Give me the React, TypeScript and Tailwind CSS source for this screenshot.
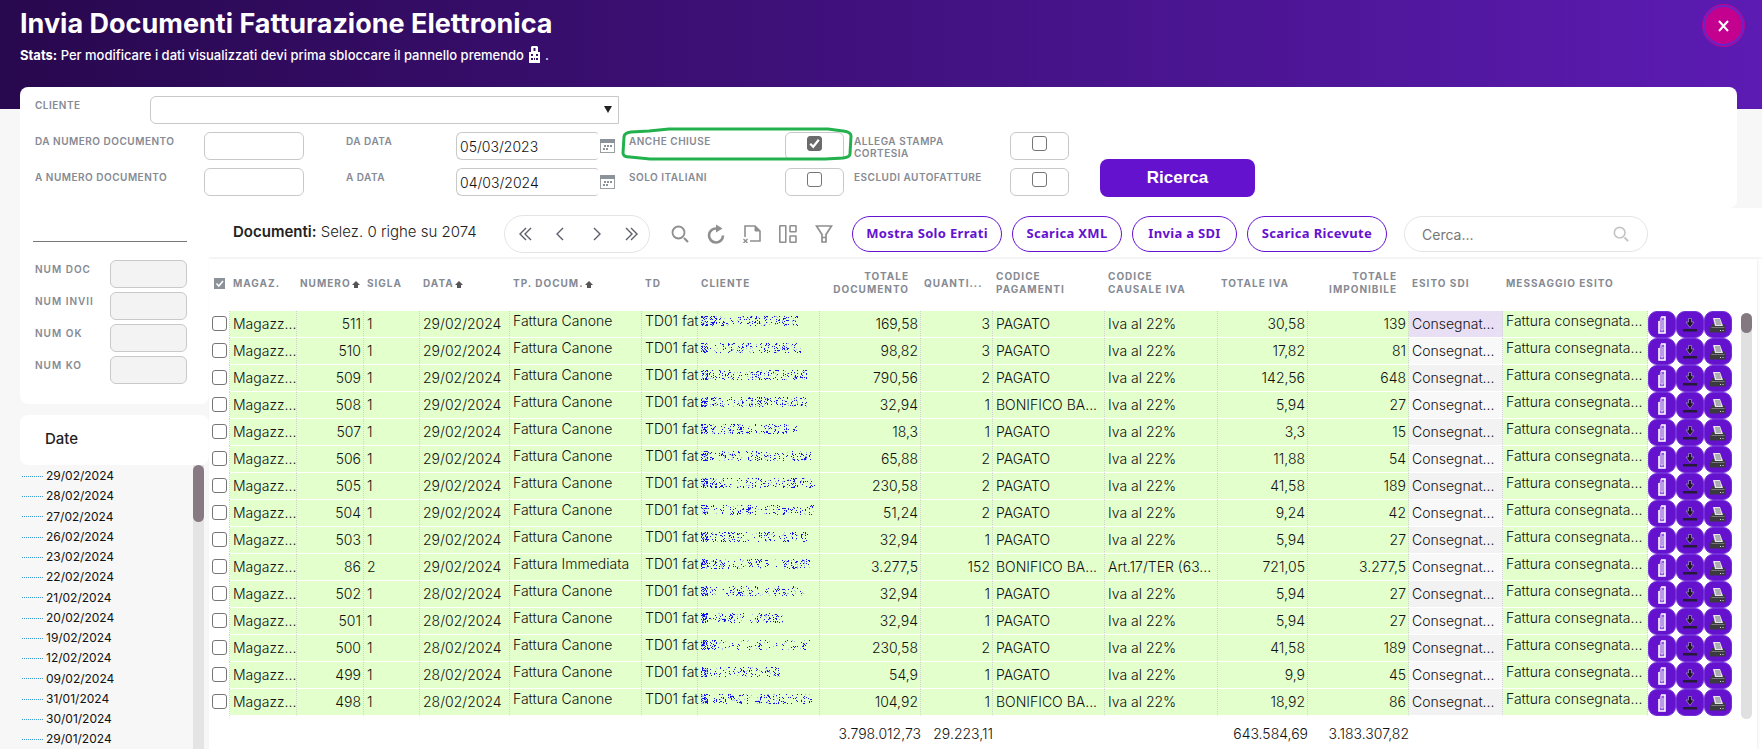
import { ReactNode } from "react";
import clsx from "clsx";

type Row = {
  numero: string;
  sigla: string;
  data: string;
  tipo: string;
  maskWidth: number;
  totale: string;
  quantita: string;
  pagamento: string;
  causale: string;
  iva: string;
  imponibile: string;
};

const PAGATO = "PAGATO";
const BONIFICO = "BONIFICO BA...";
const IVA22 = "Iva al 22%";
const CANONE = "Fattura Canone";

function row(
  numero: string,
  data: string,
  maskWidth: number,
  totale: string,
  quantita: string,
  pagamento: string,
  iva: string,
  imponibile: string,
  extra: Partial<Row> = {},
): Row {
  return {
    numero,
    sigla: "1",
    data,
    tipo: CANONE,
    maskWidth,
    totale,
    quantita,
    pagamento,
    causale: IVA22,
    iva,
    imponibile,
    ...extra,
  };
}

const rows: Row[] = [
  row("511", "29/02/2024", 97, "169,58", "3", PAGATO, "30,58", "139"),
  row("510", "29/02/2024", 101, "98,82", "3", PAGATO, "17,82", "81"),
  row("509", "29/02/2024", 108, "790,56", "2", PAGATO, "142,56", "648"),
  row("508", "29/02/2024", 109, "32,94", "1", BONIFICO, "5,94", "27"),
  row("507", "29/02/2024", 100, "18,3", "1", PAGATO, "3,3", "15"),
  row("506", "29/02/2024", 110, "65,88", "2", PAGATO, "11,88", "54"),
  row("505", "29/02/2024", 115, "230,58", "2", PAGATO, "41,58", "189"),
  row("504", "29/02/2024", 113, "51,24", "2", PAGATO, "9,24", "42"),
  row("503", "29/02/2024", 108, "32,94", "1", PAGATO, "5,94", "27"),
  row("86", "29/02/2024", 109, "3.277,5", "152", BONIFICO, "721,05", "3.277,5", {
    sigla: "2",
    tipo: "Fattura Immediata",
    causale: "Art.17/TER (63...",
  }),
  row("502", "28/02/2024", 103, "32,94", "1", PAGATO, "5,94", "27"),
  row("501", "28/02/2024", 82, "32,94", "1", PAGATO, "5,94", "27"),
  row("500", "28/02/2024", 110, "230,58", "2", PAGATO, "41,58", "189"),
  row("499", "28/02/2024", 79, "54,9", "1", PAGATO, "9,9", "45"),
  row("498", "28/02/2024", 111, "104,92", "1", BONIFICO, "18,92", "86"),
];

const dates = [
  "29/02/2024",
  "28/02/2024",
  "27/02/2024",
  "26/02/2024",
  "23/02/2024",
  "22/02/2024",
  "21/02/2024",
  "20/02/2024",
  "19/02/2024",
  "12/02/2024",
  "09/02/2024",
  "31/01/2024",
  "30/01/2024",
  "29/01/2024",
];

const labelText = "text-[10px] leading-3 font-semibold uppercase text-[#868a93]";
const box = "h-7 rounded-md border border-[#c9c9c9] bg-white";

function Field({ id, wide = false, children }: { id: string; wide?: boolean; children: ReactNode }) {
  return (
    <label htmlFor={id} className={clsx(labelText, "pt-[3px]", wide ? "tracking-widest" : "tracking-wider")}>
      {children}
    </label>
  );
}

const checkbox =
  "appearance-none size-[15px] rounded-[3px] border border-[#767676] bg-white shrink-0";

function CheckBox({ id, checked = false }: { id: string; checked?: boolean }) {
  return (
    <div className={clsx(box, "relative w-[59px] flex justify-center pt-[3px]")}>
      <input
        id={id}
        type="checkbox"
        defaultChecked={checked}
        className={clsx(checkbox, "peer checked:bg-[#6b6b6b] checked:border-[#6b6b6b]")}
      />
      <svg
        viewBox="0 0 15 15"
        className="hidden peer-checked:block pointer-events-none absolute top-[3px] left-[21px] size-[15px]"
      >
        <path d="M3.2 7.8 6.2 10.8 11.8 3.8" fill="none" stroke="#fff" strokeWidth="2.2" />
      </svg>
    </div>
  );
}

function DateField({ id, value }: { id: string; value: string }) {
  return (
    <div className="flex">
      <input
        id={id}
        defaultValue={value}
        className="h-7 w-[142px] rounded-l-md rounded-r-[3px] border border-r-0 border-[#c9c9c9] bg-white px-[3px] text-[14px] font-light text-[#111]"
      />
      <button type="button" aria-label="Calendario" className="ml-[2px] mt-[7px] h-[14px]">
        <svg width="15" height="14" viewBox="0 0 15 14">
          <rect x="0.5" y="0.5" width="14" height="13" fill="#fff" stroke="#9a9fa4" />
          <rect width="15" height="4" fill="#8b9299" />
          <path d="M4 6h2v2H4zM7 6h2v2H7zM10 6h2v2h-2zM3 9h2v2H3zM6 9h2v2H6z" fill="#8b9299" />
        </svg>
      </button>
    </div>
  );
}

function Lock() {
  return (
    <svg width="13" height="17" viewBox="0 0 13 17" className="inline-block mx-1 align-[-3px]">
      <path
        fillRule="evenodd"
        fill="#fff"
        d="M4 0h5l1 1v5h2v11H1V6h2V1zM5.500 2v3h2V2zM3 8v2h2V8zM8 8v2h2V8zM3 12v2h2v-2zM6 12v2h1v-2zM8 12v2h2v-2z"
      />
    </svg>
  );
}

function Search({ className }: { className: string }) {
  return (
    <svg viewBox="0 0 18 18" className={className} fill="none" stroke="currentColor">
      <circle cx="7.500" cy="7.500" r="6" strokeWidth="1.8" />
      <path d="m13 13 4 4" strokeWidth="2.200" />
    </svg>
  );
}

function SortArrow() {
  return (
    <svg width="8" height="8" viewBox="0 0 8 8" className="inline-block align-[-2px] ml-px">
      <path d="M4 0 8 4H6v3H2V4H0z" fill="#555" />
    </svg>
  );
}

const pages = [
  { name: "Prima pagina", d: "M8 1 2 7l6 6M13 1 7 7l6 6" },
  { name: "Pagina precedente", d: "M10 1 4 7l6 6" },
  { name: "Pagina successiva", d: "M5 1l6 6-6 6" },
  { name: "Ultima pagina", d: "M2 1l6 6-6 6M7 1l6 6-6 6" },
];

function Toolbar() {
  const pill = "h-9 rounded-full border border-[#6512cf] font-['Noto_Sans',sans-serif] text-[13px] font-bold tracking-wide text-[#6512cf] shrink-0";
  return (
    <div className="h-[51px] flex items-center pl-6 pt-[3px] border-b-2 border-[#f7f7f7] rounded-tl-lg bg-white">
      <h2 className="w-[271px] shrink-0 pb-1 text-[15px] font-light text-[#222]">
        <b className="font-semibold">Documenti:</b> Selez. 0 righe su 2074
      </h2>
      <nav className="w-[146px] h-[38px] shrink-0 mr-[21px] rounded-full border border-[#e4e4e4] flex items-center justify-between pl-[13px] pr-[10px]">
        {pages.map((p) => (
          <button key={p.name} aria-label={p.name}>
            <svg width="15" height="14" viewBox="0 0 15 14" fill="none" stroke="#5c5f69" strokeWidth="1.400">
              <path d={p.d} />
            </svg>
          </button>
        ))}
      </nav>
      <div className="flex items-center gap-[18px] mr-[19px] shrink-0 text-[#8f8f8f]">
        <button aria-label="Cerca">
          <Search className="size-[18px]" />
        </button>
        <button aria-label="Aggiorna">
          <svg width="18" height="20" viewBox="0 0 18 20">
            <path d="M9.500 4.500A7 7 0 1 0 16 11.500" fill="none" stroke="currentColor" strokeWidth="2.600" />
            <path d="M9 0.500 15.500 4.500 9 8.500z" fill="currentColor" />
          </svg>
        </button>
        <button aria-label="Esporta">
          <svg width="18" height="18" viewBox="0 0 18 18" fill="none" stroke="currentColor">
            <path d="M2 12V1h10l5 5v10H7" strokeWidth="1.600" />
            <path d="M12 1v5h5z" fill="currentColor" />
            <path d="M0.500 14l4 4M4.500 14l-4 4" strokeWidth="1.400" />
          </svg>
        </button>
        <button aria-label="Colonne">
          <svg width="18" height="18" viewBox="0 0 18 18" fill="none" stroke="currentColor" strokeWidth="1.600">
            <rect x="0.800" y="0.800" width="6" height="16.400" rx="0.500" />
            <rect x="11" y="0.800" width="6" height="6" rx="0.500" />
            <rect x="11" y="11" width="6" height="6.200" rx="0.500" />
          </svg>
        </button>
        <button aria-label="Filtra">
          <svg width="18" height="18" viewBox="0 0 18 18" fill="none" stroke="currentColor" strokeWidth="1.700">
            <path d="M1.500 1h15L11 9.500V17H7V9.500zM7 12.500h4" />
          </svg>
        </button>
      </div>
      <div className="flex gap-[10px] mr-[17px] shrink-0">
        <button className={clsx(pill, "w-[150px]")}>Mostra Solo Errati</button>
        <button className={clsx(pill, "w-[110px]")}>Scarica XML</button>
        <button className={clsx(pill, "w-[105px]")}>Invia a SDI</button>
        <button className={clsx(pill, "w-[140px]")}>Scarica Ricevute</button>
      </div>
      <div className="w-[244px] h-9 rounded-full border border-[#e4e4e4] flex items-center pl-[17px] pr-[18px]">
        <input
          aria-label="Cerca nei documenti"
          placeholder="Cerca..."
          className="min-w-0 flex-1 bg-transparent text-[14px] placeholder:text-[#777]"
        />
        <Search className="size-4 text-[#c4c4c4]" />
      </div>
    </div>
  );
}

// Customer names are masked: only scattered specks of the link colour are left.
function MaskedName({ seed, width }: { seed: number; width: number }) {
  let state = seed * 7919 + 17;
  const next = () => {
    state = (state * 1103515245 + 12345) % 2147483648;
    return state / 2147483648;
  };
  let solid = "";
  let faint = "";
  for (let x = 0; x < width; x++) {
    const gap = x % 9 > 6;
    const density = gap ? 0.02 : x < 8 ? 0.4 : 0.05 + 0.14 * Math.abs(Math.sin(x / 13 + seed));
    for (let y = 0; y < 10; y++) {
      const r = next();
      if (r < density) solid += `M${x} ${y}h1v1h-1z`;
      else if (r < density * 1.4) faint += `M${x} ${y}h1v1h-1z`;
    }
  }
  return (
    <svg width={width} height="10" className="mt-[5px]" shapeRendering="crispEdges" aria-label="Cliente oscurato">
      <path d={solid} fill="#1212f0" />
      <path d={faint} fill="#a9b4f5" />
    </svg>
  );
}

function RowActions() {
  const btn = "w-7 h-[27px] rounded-[9px] border border-[#7430d8] bg-[#6512cf] flex items-center justify-center";
  return (
    <div className="flex">
      <button aria-label="Allegati" className={btn}>
        <svg width="8" height="18" viewBox="0 0 8 18" fill="none">
          <path d="M3 1h4v16H1V5" fill="#8f5bd8" stroke="#fff" strokeWidth="1.600" />
          <path d="M3 1v13h2V4" stroke="#e4d8f7" strokeWidth="1" />
        </svg>
      </button>
      <button aria-label="Scarica" className={btn}>
        <svg width="14" height="14" viewBox="0 0 14 14">
          <path d="M5.500 0.500h3V4H11L7 9.500 3 4h2.500z" fill="#1b1820" stroke="#a78fd0" strokeWidth="0.700" />
          <path d="M0 11h14v2.500H0z" fill="#251b38" />
        </svg>
      </button>
      <button aria-label="Stampa" className={btn}>
        <svg width="16" height="16" viewBox="0 0 16 16">
          <path d="M2 7h12l2 4v4.500H0V11z" fill="#3b3b3f" />
          <path d="M1.500 10.500h13" stroke="#77777c" />
          <path d="M3 1h7l3 8H5z" fill="#e6e6ea" />
          <path d="M5 3h5M5.500 5h5M6 7h5" stroke="#66666c" strokeWidth="0.900" />
          <path d="M10 13h1v1h-1zM12.500 13h1v1h-1z" fill="#ddd" />
        </svg>
      </button>
    </div>
  );
}

const columns: { title: ReactNode; width: string; head?: string }[] = [
  { title: "Magaz.", width: "w-[67px]" },
  { title: <>Numero<SortArrow /></>, width: "w-[67px]" },
  { title: "Sigla", width: "w-[56px]" },
  { title: <>Data<SortArrow /></>, width: "w-[90px]" },
  { title: <>Tp. Docum.<SortArrow /></>, width: "w-[132px]" },
  { title: "TD", width: "w-[56px]" },
  { title: "Cliente", width: "w-[122px]" },
  { title: <>Totale<br />Documento</>, width: "w-[101px]", head: "text-right pr-3" },
  { title: "Quanti...", width: "w-[72px]" },
  { title: <>Codice<br />Pagamenti</>, width: "w-[112px]" },
  { title: <>Codice<br />Causale Iva</>, width: "w-[113px]" },
  { title: "Totale Iva", width: "w-[90px]" },
  { title: <>Totale<br />Imponibile</>, width: "w-[101px]", head: "text-right pr-3" },
  { title: "Esito SDI", width: "w-[94px]" },
  { title: "Messaggio Esito", width: "" },
];

const cell = "h-[27px] p-0 pl-[3px] border-b border-b-white border-r border-r-[#cfd3cf] [border-right-style:dotted] whitespace-nowrap";
const green = "bg-[#e3ffcc]";

function DocumentTable() {
  return (
    <table className="w-full table-fixed border-separate border-spacing-0 text-[14px] leading-5 font-light text-[#111]">
      <colgroup>
        <col className="w-[21px]" />
        {columns.map((c, i) => (
          <col key={i} className={c.width} />
        ))}
        <col className="w-[84px]" />
      </colgroup>
      <thead>
        <tr className="h-[52px]">
          <th className="p-0 pl-[5px] pt-1 pb-2">
            <button aria-label="Seleziona tutte" className="block">
              <svg width="11" height="11" viewBox="0 0 11 11">
                <rect width="11" height="11" fill="#8b9299" />
                <path d="M2.500 5.500 4.800 8 9 3" fill="none" stroke="#fff" strokeWidth="1.600" />
              </svg>
            </button>
          </th>
          {columns.map((c, i) => (
            <th
              key={i}
              className="p-0 pb-1 text-left text-[10px] leading-[13px] font-bold tracking-widest uppercase whitespace-nowrap text-[#868a93]"
            >
              <div className={clsx("pl-[3px]", c.head)}>{c.title}</div>
            </th>
          ))}
          <th className="p-0" />
        </tr>
      </thead>
      <tbody>
        {rows.map((r, i) => (
          <tr key={r.numero}>
            <td className="p-0 pl-[3px] pb-[3px] border-r border-r-[#cfd3cf] [border-right-style:dotted]">
              <input type="checkbox" aria-label={`Seleziona ${r.numero}`} className={clsx(checkbox, "block")} />
            </td>
            <td className={clsx(cell, green)}>Magazz...</td>
            <td className={clsx(cell, green, "text-right pr-[2px]")}>{r.numero}</td>
            <td className={clsx(cell, green)}>{r.sigla}</td>
            <td className={clsx(cell, green)}>{r.data}</td>
            <td className={clsx(cell, green, "align-top")}>{r.tipo}</td>
            <td className={clsx(cell, green, "align-top")}>TD01 fat</td>
            <td className={clsx(cell, green, "align-top")}>
              <MaskedName seed={i + 1} width={r.maskWidth} />
            </td>
            <td className={clsx(cell, green, "text-right pr-[2px]")}>{r.totale}</td>
            <td className={clsx(cell, green, "text-right pr-[2px]")}>{r.quantita}</td>
            <td className={clsx(cell, green)}>{r.pagamento}</td>
            <td className={clsx(cell, green)}>{r.causale}</td>
            <td className={clsx(cell, green, "text-right pr-[2px]")}>{r.iva}</td>
            <td className={clsx(cell, green, "text-right pr-[2px]")}>{r.imponibile}</td>
            <td
              className={clsx(
                cell,
                i === 0 ? "bg-[#e9dff4]" : i % 2 ? "bg-[#f8f8f8]" : "bg-[#f2f2f2]",
              )}
            >
              Consegnat...
            </td>
            <td className={clsx(cell, green, "align-top")}>Fattura consegnata...</td>
            <td className="p-0">
              <RowActions />
            </td>
          </tr>
        ))}
      </tbody>
      <tfoot>
        <tr className="h-[35px] text-right">
          <td colSpan={8} />
          <td className="p-0">3.798.012,73</td>
          <td className="p-0">29.223,11</td>
          <td colSpan={2} />
          <td className="p-0">643.584,69</td>
          <td className="p-0">3.183.307,82</td>
          <td colSpan={3} />
        </tr>
      </tfoot>
    </table>
  );
}

function Filters() {
  return (
    <form className="ml-5 mr-[25px] rounded-t-lg rounded-br-lg bg-white pl-[15px] pt-[9px] pb-1">
      <div className="flex h-9">
        <div className="w-[115px] flex">
          <Field id="cliente">Cliente</Field>
        </div>
        <div className="relative w-[469px] h-7">
          <select
            id="cliente"
            className="appearance-none w-full h-7 rounded-l-md border border-[#c9c9c9] bg-white"
          >
            <option></option>
          </select>
          <svg width="8" height="7" viewBox="0 0 8 7" className="pointer-events-none absolute right-[7px] top-[10px]">
            <path d="M0 0h8L4 7z" fill="#222" />
          </svg>
        </div>
      </div>
      <div className="grid auto-rows-[36px] grid-cols-[169px_142px_110px_173px_156px_69px_156px_90px_155px] items-start">
        <Field id="da-numero">Da numero documento</Field>
        <input id="da-numero" className={clsx(box, "w-[100px]")} />
        <Field id="da-data">Da data</Field>
        <DateField id="da-data" value="05/03/2023" />
        <div className="relative flex">
          <Field id="chiuse">Anche chiuse</Field>
          <svg
            width="232"
            height="35"
            viewBox="0 0 232 35"
            className="pointer-events-none absolute z-10 -left-2 -top-[5px] max-w-none"
          >
            <path
              d="M28 4 10 5Q3 6 3 10L2 26Q2 30 9 30L29 32H204L222 31Q229 30 229 27L230 9Q230 5 222 4L207 2H48z"
              fill="none"
              stroke="#22b14c"
              strokeWidth="3"
            />
          </svg>
        </div>
        <CheckBox id="chiuse" checked />
        <Field id="stampa">
          Allega stampa
          <br />
          cortesia
        </Field>
        <CheckBox id="stampa" />
        <button
          type="button"
          className="row-span-2 mt-[27px] h-[38px] rounded-lg bg-[#6512cf] font-['Liberation_Sans',sans-serif] text-[17px] font-bold text-white"
        >
          Ricerca
        </button>
        <Field id="a-numero">A numero documento</Field>
        <input id="a-numero" className={clsx(box, "w-[100px]")} />
        <Field id="a-data">A data</Field>
        <DateField id="a-data" value="04/03/2024" />
        <Field id="italiani">Solo italiani</Field>
        <CheckBox id="italiani" />
        <Field id="autofatture">Escludi autofatture</Field>
        <CheckBox id="autofatture" />
      </div>
    </form>
  );
}

function Sidebar() {
  return (
    <aside className="w-[209px] shrink-0 pl-5 flex flex-col min-h-0">
      <div className="h-[196px] shrink-0 rounded-b-lg bg-white pl-[13px] pr-[22px] pt-[33px]">
        <hr className="border-[#777] mb-[18px]" />
        <div className="flex flex-col gap-1">
          {["Num doc", "Num invii", "Num ok", "Num ko"].map((name) => (
            <div key={name} className="flex justify-between pl-[2px]">
              <Field id={name} wide>
                {name}
              </Field>
              <input id={name} readOnly className="w-[77px] h-7 rounded-md border border-[#c9c9c9] bg-[#f3f3f3]" />
            </div>
          ))}
        </div>
      </div>
      <h2 className="mt-[11px] h-[50px] shrink-0 rounded-lg bg-white pl-[25px] pt-[13px] text-[15px] font-medium text-[#222]">
        Date
      </h2>
      <div className="flex flex-1 min-h-0">
        <ul className="flex-1 overflow-hidden pl-[2px] pt-px text-[12px] text-[#111]">
          {dates.map((d) => (
            <li key={d} className="h-5 nth-[4n+3]:h-[21px] flex items-center">
              <span className="w-[21px] mr-[3px] border-t border-dotted border-[#3a9bd0]" />
              {d}
            </li>
          ))}
        </ul>
        <div className="w-[11px] mr-[5px] bg-[#e4e4e4]">
          <div className="h-[57px] rounded-full bg-[#877a82]" />
        </div>
      </div>
    </aside>
  );
}

export default function App() {
  return (
    <div className="h-screen flex flex-col overflow-hidden bg-[#f7f7f7] font-['Inter',sans-serif]">
      <header className="h-[109px] shrink-0 flex justify-between bg-linear-to-r from-[#28084e] to-[#5c1bb3] pl-5 pr-[17px] text-white">
        <div className="pt-[7px]">
          <h1 className="text-[27px] leading-[34px] font-bold">Invia Documenti Fatturazione Elettronica</h1>
          <p className="mt-1 text-[13px] leading-5 font-medium">
            <b>Stats:</b> Per modificare i dati visualizzati devi prima sbloccare il pannello premendo
            <Lock />.
          </p>
        </div>
        <button
          aria-label="Chiudi"
          className="mt-1 size-[43px] rounded-full border border-[#c4008f] bg-[#6a24c4] p-[2px]"
        >
          <span className="size-full rounded-full bg-[#c4008f] flex items-center justify-center">
            <svg width="11" height="12" viewBox="0 0 11 12">
              <path d="m1 1 9 10M10 1 1 11" stroke="#fff" strokeWidth="2" />
            </svg>
          </span>
        </button>
      </header>
      <div className="-mt-[22px] shrink-0">
        <Filters />
      </div>
      <div className="flex flex-1 min-h-0">
        <Sidebar />
        <main className="flex-1 min-w-0 bg-white">
          <Toolbar />
          <div className="flex mr-[5px] shadow-[1px_0_3px_#eee]">
            <div className="flex-1 min-w-0">
              <DocumentTable />
            </div>
            <div className="mr-[5px] ml-[9px] mt-[54px] mb-8 w-[11px] shrink-0 rounded-full bg-[#e0e0e0]">
              <div className="h-5 rounded-full bg-[#857981]" />
            </div>
          </div>
        </main>
      </div>
    </div>
  );
}
